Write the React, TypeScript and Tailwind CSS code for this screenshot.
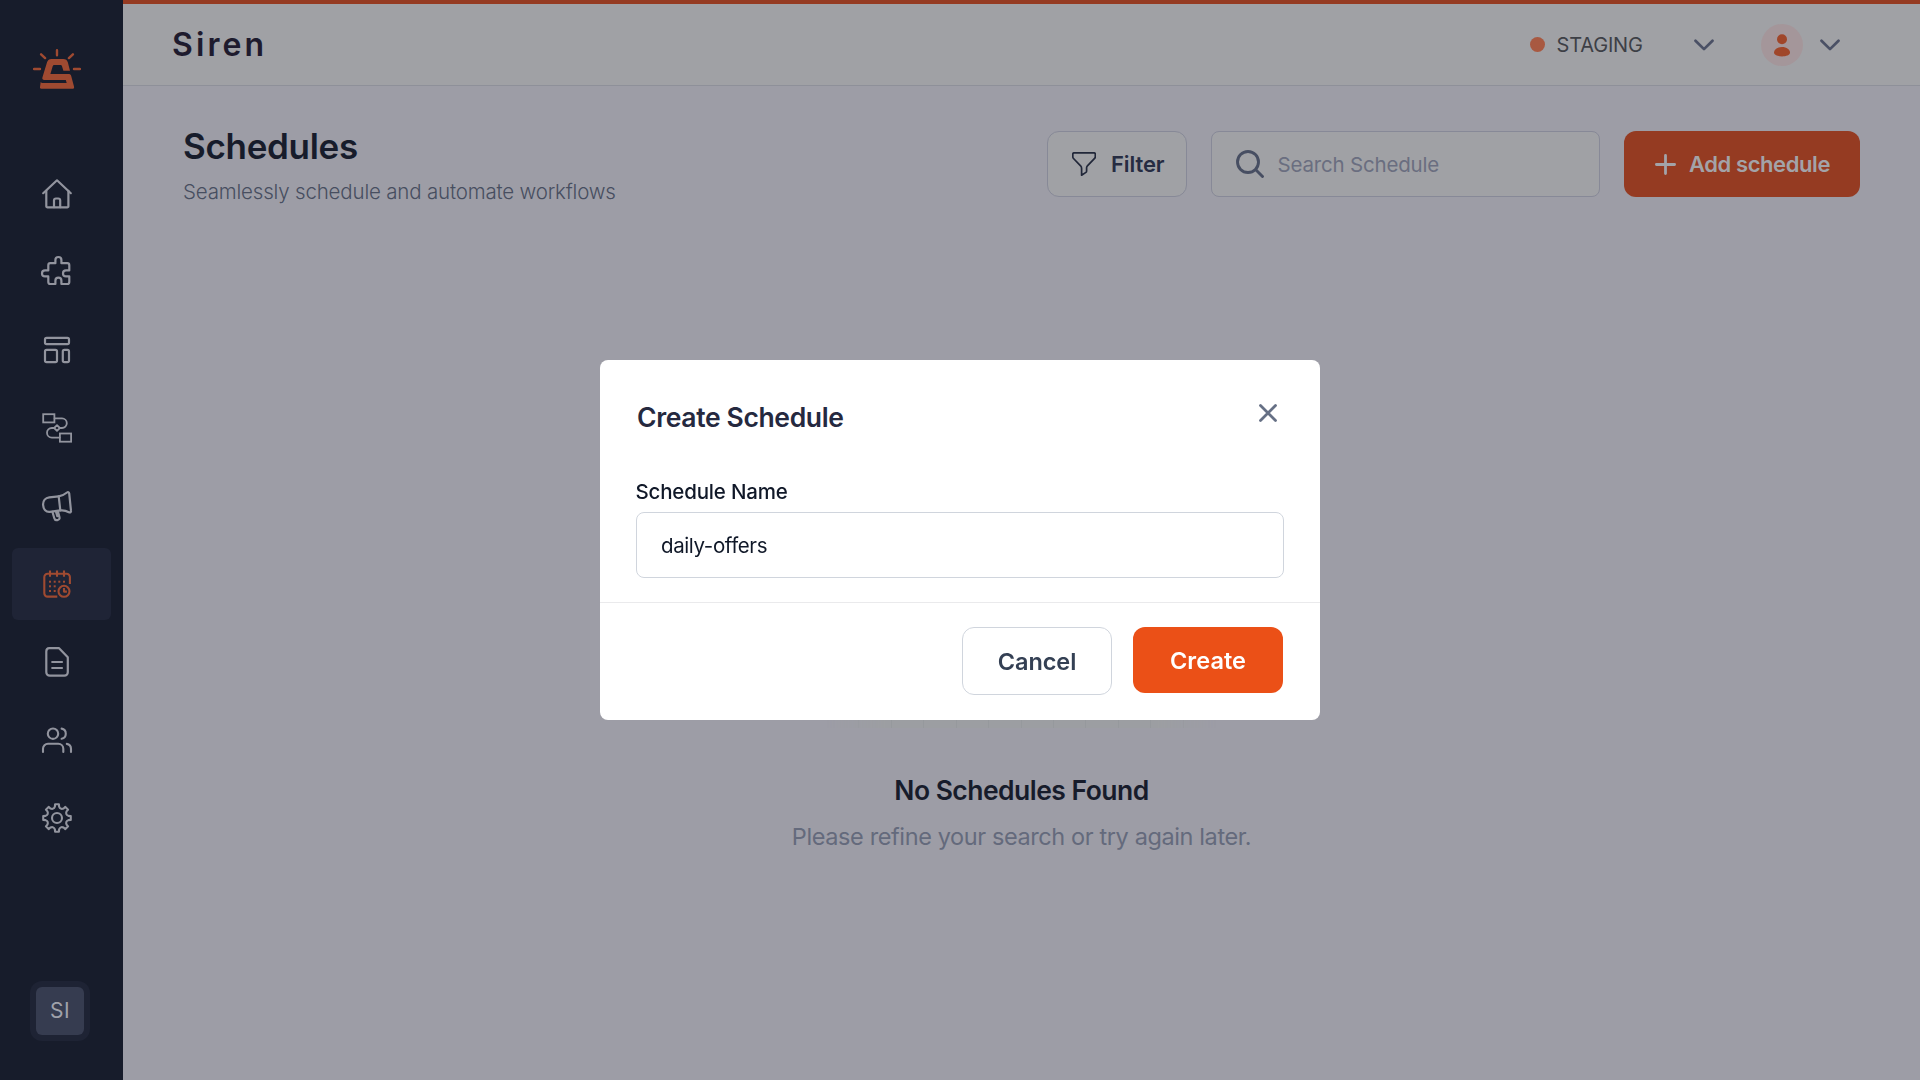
import React from 'react';

const polar = (deg: number, r: number) => {
  const a = (deg * Math.PI) / 180;
  return `${(15 + r * Math.sin(a)).toFixed(2)} ${(15 - r * Math.cos(a)).toFixed(2)}`;
};

const gearPath =
  Array.from({ length: 8 }, (_, k) => {
    const a = k * 45;
    return `${k === 0 ? 'M' : 'L'}${polar(a - 8, 13.9)} L${polar(a + 8, 13.9)} L${polar(a + 10.5, 11.6)} Q${polar(a + 22.5, 8.9)} ${polar(a + 34.5, 11.6)}`;
  }).join(' ') + 'Z';

function NavSvg({ children, width = 1.8 }: { children: React.ReactNode; width?: number }) {
  return (
    <svg
      viewBox="0 0 30 30"
      className="size-[30px] overflow-visible"
      fill="none"
      stroke="currentColor"
      strokeWidth={width}
      strokeLinecap="round"
      strokeLinejoin="round"
    >
      {children}
    </svg>
  );
}

const HomeIcon = () => (
  <NavSvg width={2.2}>
    <path d="M1.2 14.2 15 1.3l13.8 12.9" />
    <path d="M4.3 11.8v15.4a1.2 1.2 0 0 0 1.2 1.2h19.7a1.2 1.2 0 0 0 1.2-1.2V11.8" />
    <path d="M12 28.2v-6.7a2 2 0 0 1 2-2h2.2a2 2 0 0 1 2 2v6.7" />
  </NavSvg>
);

const PuzzleIcon = () => (
  <NavSvg width={2.2}>
    <path d="M6.3 8.2a2 2 0 0 1 2-2h5.1V3a3 3 0 0 1 6 0v3.2h5.9a2 2 0 0 1 2 2v5.2H24a3 3 0 0 0 0 6h3.3V25a2 2 0 0 1-2 2h-5.9v-3.3a3 3 0 0 0-6 0V27H8.3a2 2 0 0 1-2-2v-5.6H3a3 3 0 0 1 0-6h3.3Z" />
  </NavSvg>
);

const LayoutIcon = () => (
  <NavSvg width={2.2}>
    <rect x="3" y="2.8" width="24" height="6.4" rx="1.6" />
    <rect x="3" y="14.8" width="12" height="12.4" rx="1.6" />
    <rect x="20.8" y="14.8" width="6.2" height="12.4" rx="1.6" />
  </NavSvg>
);

const FlowIcon = () => (
  <NavSvg width={1.8}>
    <rect x="1.2" y="1.2" width="11.2" height="8.2" strokeLinejoin="miter" />
    <rect x="17.9" y="20.5" width="11.2" height="8.2" strokeLinejoin="miter" />
    <path d="M12.6 5.4H20a4.8 4.8 0 0 1 0 9.6h-2.3M12.4 15H9.8a4.8 4.8 0 0 0 0 9.6h7.9" />
    <path d="M15 12.2 17.8 15 15 17.8 12.2 15Z" />
  </NavSvg>
);

const MegaphoneIcon = () => (
  <NavSvg width={2.2}>
    <path d="M16.7 5.3 7.3 6.3C3.5 6.8.8 9.8 1.1 14c.3 4.3 2.9 7.2 6.7 6.8l10.5-1.4c3.5-.4 6.2.4 8.6 1.8 1.3.6 2.3 0 2.1-1.3L27.2 2.4c-.2-1.3-1.2-1.7-2.2-.9-2.7 2.2-4.8 3.4-8.3 3.8Z" />
    <path d="m16.7 5.3 1.6 14.1" />
    <path d="m10.4 20.8 1.9 6.4c.4 1.5 1.6 2.2 3 1.9 1.7-.4 2.6-1.4 2.2-2.8l-1.7-6.2M14 20.6l1.3 4.6" />
  </NavSvg>
);

const ScheduleIcon = () => (
  <NavSvg width={2.1}>
    <path strokeLinecap="butt" d="M15.3 27.6H5.6a3.3 3.3 0 0 1-3.3-3.3V8.1a3.3 3.3 0 0 1 3.3-3.3h19a3.3 3.3 0 0 1 3.3 3.3v7" />
    <path strokeLinecap="butt" d="M8 1.4v6.4M15 1.4v6.4M22 1.4v6.4" />
    <g fill="currentColor" stroke="none">
      {[
        [8, 12.7], [12.7, 12.7], [17.3, 12.7], [22, 12.7],
        [8, 17.3], [12.7, 17.3],
        [8, 22], [12.7, 22],
      ].map(([x, y]) => (
        <rect key={`${x}-${y}`} x={x - 1} y={y - 1} width="2" height="2" />
      ))}
    </g>
    <circle cx="22" cy="22.3" r="5.5" />
    <path strokeLinecap="butt" d="M22 19v3.6h2.9" />
  </NavSvg>
);

const DocumentIcon = () => (
  <NavSvg width={2.2}>
    <path d="M7.3 1.2h9.8l8.7 9v15a3.4 3.4 0 0 1-3.4 3.4H7.7a3.4 3.4 0 0 1-3.4-3.4V4.4a3.2 3.2 0 0 1 3-3.2Z" />
    <path d="M10.2 15h9.8M10.2 21h9.8" />
  </NavSvg>
);

const UsersIcon = () => (
  <NavSvg width={2.1}>
    <circle cx="11" cy="8.7" r="5.2" />
    <path d="M1 27v-3.3a5 5 0 0 1 5-5h10.3a5 5 0 0 1 5 5V27" />
    <path d="M19.6 3.6a5.2 5.2 0 0 1 0 10.2M24.8 18.9a5 5 0 0 1 4.2 4.9V27" />
  </NavSvg>
);

const GearIcon = () => (
  <NavSvg width={2.1}>
    <path d={gearPath} />
    <circle cx="15" cy="15" r="5" />
  </NavSvg>
);

const navItems = [
  { name: 'Home', Icon: HomeIcon },
  { name: 'Integrations', Icon: PuzzleIcon },
  { name: 'Templates', Icon: LayoutIcon },
  { name: 'Workflows', Icon: FlowIcon },
  { name: 'Campaigns', Icon: MegaphoneIcon },
  { name: 'Schedules', Icon: ScheduleIcon, active: true },
  { name: 'Documents', Icon: DocumentIcon },
  { name: 'Users', Icon: UsersIcon },
  { name: 'Settings', Icon: GearIcon },
];

const Logo = () => (
  <svg viewBox="0 0 48 40" className="ml-[33px] h-10 w-12 text-[#9f4a31]" fill="currentColor">
    <path d="M24 1.3v4.9M1 20h6M41 20h6M8.1 5.3l4 3.8M39.9 5.3l-4 3.8" stroke="currentColor" strokeWidth="2.4" strokeLinecap="round" />
    <path d="M18.5 10h11.7c2.5 0 4 1.2 4.7 3.4L37 21.7h-6.6L29 17.2c-.3-.8-.7-1.2-1.6-1.2h-6.2c-.8 0-1.3.4-1.5 1.2L17.4 25h18c1.6 0 2.4.6 2.8 2L41 37.4c.4 1.5-.2 2.3-1.7 2.3H8.4c-1.2 0-1.6-.6-1.4-1.7l.7-5c.5.7 1.2 1 2.3 1h23.7l-.9-3H11.3c-1.6 0-2.3-.9-1.9-2.4l4.4-14.7c.8-2.7 2-3.9 4.7-3.9Z" />
  </svg>
);

const Chevron = () => (
  <svg viewBox="0 0 20 12" className="h-3 w-5 text-[#4a5065]" fill="none" stroke="currentColor" strokeWidth="2.7" strokeLinecap="round" strokeLinejoin="round">
    <path d="m1.5 1.7 8.5 8.4 8.5-8.4" />
  </svg>
);

function Sidebar() {
  return (
    <aside className="flex w-[123px] shrink-0 flex-col bg-[#171c2b] pt-[49px]">
      <Logo />
      <nav className="mt-[69px] ml-3 flex w-[99px] flex-col gap-1.5">
        {navItems.map(({ name, Icon, active }) => (
          <a
            key={name}
            aria-label={name}
            className={
              active
                ? 'flex h-[72px] items-center rounded-md bg-[#1f2436] pl-[30px] text-[#9f4a31]'
                : 'flex h-[72px] items-center rounded-md pl-[30px] text-[#92949e]'
            }
          >
            <Icon />
          </a>
        ))}
      </nav>
      <div className="mt-auto mb-[39px] ml-[30px] flex size-[60px] items-center justify-center rounded-xl bg-[#1e2334]">
        <div className="flex size-12 items-center justify-center rounded-md bg-[#363c50] pb-0.5 text-[21px] leading-none tracking-[0.5px] text-[#a0a2ab]">
          SI
        </div>
      </div>
    </aside>
  );
}

function Header() {
  return (
    <header className="flex h-[86px] items-center border-t-4 border-b border-t-[#953b22] border-b-[#8e9099] bg-[#a0a1a5] pr-20 pl-[49px]">
      <div className="text-[32px] leading-10 font-semibold tracking-[3.1px] text-[#1e1b2e]">Siren</div>
      <div className="ml-auto flex items-center">
        <span className="size-[15px] rounded-full bg-[#a85941]" />
        <span className="ml-[11.5px] w-[137.5px] pt-px text-[20px] leading-6 tracking-[-0.17px] text-[#3d3f46]">STAGING</span>
        <Chevron />
        <span className="ml-[47px] flex size-[42px] items-center justify-center rounded-full bg-[#a4969a]">
          <svg viewBox="0 0 16 24" className="h-6 w-4 text-[#a0462a]" fill="currentColor">
            <circle cx="8" cy="6.3" r="5" />
            <path d="M8 14c4.7 0 8 2.6 8 5.6 0 2.6-4 3.9-8 3.9s-8-1.3-8-3.9C0 16.6 3.3 14 8 14Z" />
          </svg>
        </span>
        <span className="ml-[17px]">
          <Chevron />
        </span>
      </div>
    </header>
  );
}

function Toolbar() {
  return (
    <div className="flex items-start justify-between px-[60px]">
      <div className="pt-[38px]">
        <h1 className="text-[35px] leading-[44px] font-semibold tracking-[-0.3px] text-[#171c2b]">Schedules</h1>
        <p className="mt-3 text-[20.5px] leading-6 font-light tracking-[-0.18px] text-[#474e60]">
          Seamlessly schedule and automate workflows
        </p>
      </div>
      <div className="flex gap-6 pt-[45px]">
        <button className="flex h-[66px] w-[140px] items-center rounded-[12px] border border-[#878997] bg-[#a0a1a5] pl-6">
          <svg viewBox="0 0 24 24" className="size-6 text-[#212739]" fill="none" stroke="currentColor" strokeWidth="1.7" strokeLinejoin="round">
            <path d="M2 .8h20a1.3 1.3 0 0 1 1.3 1.3v2.6a2.5 2.5 0 0 1-.7 1.7l-7.2 7.4a2.8 2.8 0 0 0-.8 1.9v3.2a2 2 0 0 1-.7 1.5L9.6 23.2v-6.7c0-1-.3-1.9-1-2.7L1.5 6.5A2.6 2.6 0 0 1 .8 4.7V2.1A1.3 1.3 0 0 1 2 .8Z" />
          </svg>
          <span className="ml-[15px] text-[22px] leading-6 font-semibold tracking-[-0.1px] text-[#262c42]">Filter</span>
        </button>
        <div className="flex h-[66px] w-[389px] items-center rounded-[8px] border border-[#878997] bg-[#a0a1a5] pl-6">
          <svg viewBox="0 0 28 28" className="size-7 text-[#474e62]" fill="none" stroke="currentColor" strokeWidth="2.9" strokeLinecap="round">
            <circle cx="12" cy="12" r="10.5" />
            <path d="m19.8 19.8 6.7 6.7" />
          </svg>
          <span className="ml-[13.5px] pt-0.5 text-[20.5px] leading-6 tracking-[-0.19px] text-[#6a6e80]">Search Schedule</span>
        </div>
        <button className="flex h-[66px] w-[236px] items-center rounded-[12px] bg-[#953b22] pl-[31px] text-[#a3a3a8]">
          <svg viewBox="0 0 21 21" className="size-[21px]" fill="none" stroke="currentColor" strokeWidth="2.8" strokeLinecap="round">
            <path d="M10.5 1.4v18.2M1.4 10.5h18.2" />
          </svg>
          <span className="ml-[13px] text-[22px] leading-6 font-semibold tracking-[-0.42px]">Add schedule</span>
        </button>
      </div>
    </div>
  );
}

function EmptyState() {
  return (
    <div className="mt-[324px] flex flex-col items-center">
      <div className="grid h-[200px] w-[389px] grid-cols-12 [mask-image:linear-gradient(to_right,transparent,black_15%,black_85%,transparent)]">
        {Array.from({ length: 12 }, (_, i) => (
          <span key={i} className="border-r border-[#96999d] bg-[#9c9ea2]" />
        ))}
      </div>
      <h2 className="mt-[45px] text-[26.5px] leading-[34px] font-semibold tracking-[-0.53px] text-[#171c2b]">
        No Schedules Found
      </h2>
      <p className="mt-3.5 text-[23.5px] leading-8 tracking-[-0.39px] text-[#646a7c]">
        Please refine your search or try again later.
      </p>
    </div>
  );
}

function CreateScheduleDialog() {
  return (
    <div className="fixed inset-0 flex items-center justify-center">
      <div role="dialog" className="flex h-[360px] w-[720px] flex-col rounded-lg bg-white">
        <div className="flex items-start justify-between pt-10 pr-[43px] pl-[37px]">
          <h3 className="text-[26.5px] leading-[34px] font-semibold tracking-[-0.36px] text-[#25293f]">Create Schedule</h3>
          <svg viewBox="0 0 18 18" className="mt-1 size-[18px] text-[#667085]" fill="none" stroke="currentColor" strokeWidth="2.8" strokeLinecap="round">
            <path d="m1.5 1.5 15 15M16.5 1.5l-15 15" />
          </svg>
        </div>
        <label className="mt-[46px] ml-[35.5px] text-[20.5px] leading-6 font-medium tracking-[-0.18px] text-[#101828]">Schedule Name</label>
        <div className="mt-2 mr-9 ml-9 flex h-[66px] items-center rounded-[8px] border border-[#d0d5dd] pt-0.5 pl-6 text-[20.5px] leading-6 tracking-[-0.39px] text-[#101828]">
          daily-offers
        </div>
        <div className="mt-6 flex items-start justify-end gap-[21px] border-t border-[#eaeaec] pt-6 pr-[37px]">
          <button className="h-[68px] w-[150px] rounded-[12px] border border-[#d0d5dd] pt-0.5 text-[23.5px] leading-none font-semibold tracking-[-0.06px] text-[#344054]">
            Cancel
          </button>
          <button className="h-[66px] w-[150px] rounded-[12px] bg-[#eb5017] pt-0.5 text-[23.5px] leading-none font-semibold tracking-[0.08px] text-white">
            Create
          </button>
        </div>
      </div>
    </div>
  );
}

export default function App() {
  return (
    <div className="flex h-screen w-screen overflow-hidden bg-[#9d9da6] font-[Inter,sans-serif]">
      <Sidebar />
      <main className="flex min-w-0 flex-1 flex-col">
        <Header />
        <Toolbar />
        <EmptyState />
      </main>
      <CreateScheduleDialog />
    </div>
  );
}
